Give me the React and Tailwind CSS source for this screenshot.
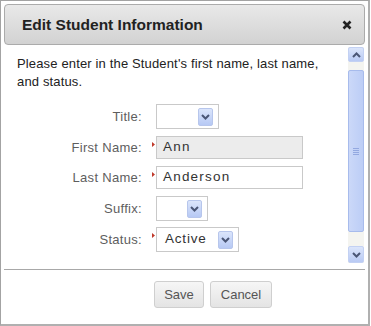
import React from "react";

function DropBtn() {
  return (
    <div className="w-[15px] h-[18px] rounded-[2px] border border-[#b7c6ec] bg-gradient-to-b from-[#dbe5fb] to-[#b7c9f4] flex items-center justify-center">
      <svg width="9" height="6" viewBox="0 0 9 6">
        <path d="M1 1 L4.5 4.5 L8 1" stroke="#4a5676" strokeWidth="2" fill="none" />
      </svg>
    </div>
  );
}

function Select({ w, value }) {
  return (
    <div className={`${w} h-[25px] border border-[#c9c9c9] bg-white flex items-center pl-[8px] pr-[5px]`}>
      <span className="flex-1 text-[13.5px] text-[#333] tracking-[0.8px]">{value}</span>
      <DropBtn />
    </div>
  );
}

function Marker() {
  return (
    <svg width="3" height="5" viewBox="0 0 3 5" className="absolute left-[-4px] top-[6px]">
      <path d="M0 0 L3 2.5 L0 5 Z" fill="#c0392b" />
    </svg>
  );
}

function Row({ label, children, mt }) {
  return (
    <div className={`flex items-center ${mt}`}>
      <div className="w-[138px] text-right text-[13px] text-[#5e5e5e] tracking-[0.3px]">{label}</div>
      <div className="ml-[14px] relative">{children}</div>
    </div>
  );
}

export default function App() {
  return (
    <div className="w-[371px] h-[326px] bg-white" style={{ fontFamily: '"Liberation Sans", Arial, sans-serif' }}>
      <div className="w-[370px] h-[326px] border border-[#a3a3a3] border-r-2 border-b-2 border-r-[#b0b0b0] border-b-[#b0b0b0] flex flex-col px-[3px] pt-[3px]">
        <div className="h-[41px] rounded-[4px] border border-[#ababab] bg-gradient-to-b from-[#e9e9e9] to-[#d2d2d2] flex items-center pl-[17px] pr-[12px]">
          <span className="flex-1 text-[15.5px] font-bold text-[#222]">Edit Student Information</span>
          <svg width="10" height="10" viewBox="0 0 10 10">
            <path d="M1.5 1.5 L8.5 8.5 M8.5 1.5 L1.5 8.5" stroke="#222" strokeWidth="2.6" />
          </svg>
        </div>
        <div className="flex h-[218px]">
          <div className="flex-1 pt-[10px] pl-[13px]">
            <p className="text-[13px] leading-[18px] text-[#222] tracking-[0.15px]">
              Please enter in the Student's first name, last name,<br />and status.
            </p>
            <div className="-ml-[13px]">
              <Row label="Title:" mt="mt-[13px]">
                <Select w="w-[63px]" value="" />
              </Row>
              <Row label="First Name:" mt="mt-[7px]">
                <Marker />
                <div className="w-[147px] h-[23px] border border-[#c9c9c9] bg-[#ececec] pl-[6px] flex items-center text-[13.5px] text-[#333] tracking-[1.2px]">Ann</div>
              </Row>
              <Row label="Last Name:" mt="mt-[7px]">
                <Marker />
                <div className="w-[147px] h-[23px] border border-[#c9c9c9] bg-white pl-[6px] flex items-center text-[13.5px] text-[#333] tracking-[1.2px]">Anderson</div>
              </Row>
              <Row label="Suffix:" mt="mt-[7px]">
                <Select w="w-[52px]" value="" />
              </Row>
              <Row label="Status:" mt="mt-[6px]">
                <Marker />
                <Select w="w-[83px]" value="Active" />
              </Row>
            </div>
          </div>
          <div className="w-[16px] mr-[1px] mt-[2px] h-[216px] bg-[#f4f4f0] flex flex-col">
            <div className="h-[15px] rounded-[2px] border border-[#c3d1f3] bg-gradient-to-b from-[#dbe5fb] to-[#b9caf4] flex items-center justify-center">
              <svg width="9" height="6" viewBox="0 0 9 6">
                <path d="M1 5 L4.5 1.5 L8 5" stroke="#4a5676" strokeWidth="2" fill="none" />
              </svg>
            </div>
            <div className="flex-1 pt-[8px] pb-[14px]">
              <div className="h-full rounded-[2px] border border-[#a7bbec] bg-gradient-to-r from-[#cbd8f8] to-[#bccdf6] flex items-center justify-center">
                <div className="flex flex-col gap-[1px]">
                  <div className="w-[6px] h-px bg-[#93a8e0]" />
                  <div className="w-[6px] h-px bg-[#93a8e0]" />
                  <div className="w-[6px] h-px bg-[#93a8e0]" />
                  <div className="w-[6px] h-px bg-[#93a8e0]" />
                </div>
              </div>
            </div>
            <div className="h-[17px] rounded-[2px] border border-[#c3d1f3] bg-gradient-to-b from-[#dbe5fb] to-[#b9caf4] flex items-center justify-center">
              <svg width="9" height="6" viewBox="0 0 9 6">
                <path d="M1 1 L4.5 4.5 L8 1" stroke="#4a5676" strokeWidth="2" fill="none" />
              </svg>
            </div>
          </div>
        </div>
        <div className="mt-[6px] h-[1px] bg-[#a8a8a8]" />
        <div className="flex gap-[6px] pl-[150px] pt-[11px]">
          <button className="w-[50px] h-[27px] rounded-[3px] border border-[#cfcfcf] bg-gradient-to-b from-[#f6f6f6] to-[#e4e4e4] text-[13px] text-[#555]">Save</button>
          <button className="w-[62px] h-[27px] rounded-[3px] border border-[#cfcfcf] bg-gradient-to-b from-[#f6f6f6] to-[#e4e4e4] text-[13px] text-[#555]">Cancel</button>
        </div>
      </div>
    </div>
  );
}
